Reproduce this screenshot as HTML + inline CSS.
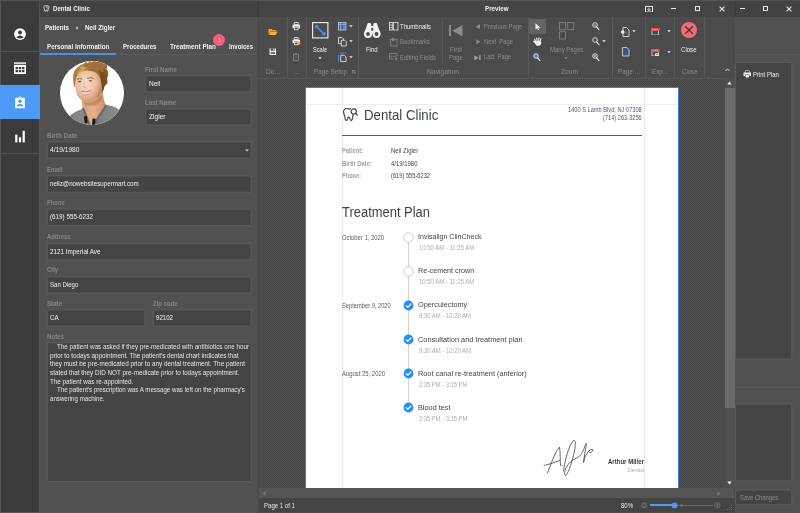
<!DOCTYPE html>
<html lang="en"><head><meta charset="utf-8"><title>Dental Clinic</title><style>
html,body{margin:0;padding:0;}
body{width:800px;height:513px;overflow:hidden;background:#515151;position:relative;font-family:"Liberation Sans",sans-serif;}
.r{position:absolute;box-sizing:border-box;}
.t{position:absolute;white-space:pre;line-height:10px;height:10px;transform-origin:0 50%;display:block;}
</style></head><body>
<div class="r" style="left:40px;top:0px;width:760px;height:17px;background:#434343;"></div>
<div class="r" style="left:0px;top:0px;width:39.2px;height:513px;background:#3b3b3b;"></div>
<div class="r" style="left:0px;top:0px;width:800px;height:1px;background:#525252;"></div>
<div class="r" style="left:0px;top:0px;width:1px;height:513px;background:#555555;"></div>
<div class="r" style="left:0px;top:511.7px;width:257px;height:1.3px;background:#585858;"></div>
<div class="r" style="left:39.2px;top:17px;width:0.8px;height:495px;background:#575757;"></div>
<div class="r" style="left:0px;top:51px;width:39.5px;height:1px;background:#505050;"></div>
<div class="r" style="left:0px;top:153.2px;width:39.5px;height:1px;background:#505050;"></div>
<div class="r" style="left:0px;top:85.3px;width:39.7px;height:34.2px;background:#4c9af6;"></div>
<svg class="r" style="left:13px;top:27px;" width="14" height="14" viewBox="0 0 14 14"><circle cx="7" cy="7.1" r="5.9" fill="#fff"/><circle cx="7" cy="5.4" r="2" fill="#3b3b3b"/><path d="M3.2 10.2 Q7 6.6 10.8 10.2 Q7 12.6 3.2 10.2Z" fill="#3b3b3b"/></svg>
<svg class="r" style="left:13px;top:61px;" width="14" height="14" viewBox="0 0 14 14"><rect x="1" y="1.4" width="12" height="1.4" fill="#fff"/><path d="M1 3.8h12v9.2h-12z" fill="#fff"/><g fill="#3b3b3b"><rect x="2.6" y="6" width="2.4" height="2.2"/><rect x="5.8" y="6" width="2.4" height="2.2"/><rect x="9" y="6" width="2.4" height="2.2"/><rect x="2.6" y="9" width="2.4" height="2.2"/><rect x="5.8" y="9" width="2.4" height="2.2"/><rect x="9" y="9" width="2.4" height="2.2"/></g></svg>
<svg class="r" style="left:13px;top:95px;" width="14" height="14" viewBox="0 0 14 14"><path d="M2.2 2.8h3.3a1.5 1.5 0 0 1 3 0h3.3v10.4h-9.6z" fill="#fff"/><circle cx="7" cy="6.3" r="1.7" fill="#4c9af6"/><path d="M3.8 11.3q0-2.3 3.2-2.3t3.2 2.3z" fill="#4c9af6"/><circle cx="7" cy="2.7" r=".6" fill="#4c9af6"/></svg>
<svg class="r" style="left:13px;top:129px;" width="14" height="14" viewBox="0 0 14 14"><rect x="2.2" y="5.6" width="2.2" height="7.8" fill="#fff"/><rect x="5.9" y="8.2" width="2.2" height="5.2" fill="#fff"/><rect x="9.6" y="1.8" width="2.2" height="11.6" fill="#fff"/></svg>
<svg class="r" style="left:43.3px;top:5.4px;" width="6.6" height="7.2" viewBox="0 0 10 12"><path d="M3.2 1.2C1.6 1.2.9 2.5 1 4c.1 1.300.7 2 .9 3.200.2 1.400.3 3.600 1.300 3.600.9 0 .7-2.800 1.800-2.800s.9 2.800 1.800 2.800c1 0 1.100-2.200 1.300-3.600.2-1.200.8-1.900.9-3.200.1-1.500-.6-2.800-2.200-2.800-.9 0-1.300.4-1.800.4s-.9-.4-1.800-.4z" fill="none" stroke="#eee" stroke-width="1.4" stroke-linejoin="round"/><circle cx="7.600" cy="3.200" r="2" fill="#434343" stroke="#eee" stroke-width="1.100"/></svg>
<span class="t" style="left:52.75px;top:4.10px;font-size:6.5px;color:#f2f2f2;transform:scaleX(0.9335);font-weight:bold;">Dental Clinic</span>
<div class="r" style="left:739.6px;top:8.3px;width:5px;height:1.2px;background:#e8e8e8;"></div>
<div class="r" style="left:763px;top:6.2px;width:5px;height:5px;background:transparent;border:1px solid #e8e8e8;"></div>
<svg class="r" style="left:785.5px;top:5.7px;" width="6" height="6" viewBox="0 0 6 6"><path d="M.6.6l4.800 4.800M5.400.6l-4.800 4.800" stroke="#e8e8e8" stroke-width="1.100" fill="none"/></svg>
<span class="t" style="left:44.80px;top:23.20px;font-size:6.5px;color:#f2f2f2;transform:scaleX(0.9491);font-weight:bold;">Patients</span>
<svg class="r" style="left:75.6px;top:25.8px;" width="3" height="4" viewBox="0 0 3 4"><path d="M.4.300L2.400 2 .4 3.700z" fill="#ddd"/></svg>
<span class="t" style="left:84.70px;top:23.20px;font-size:6.5px;color:#f2f2f2;transform:scaleX(0.9642);font-weight:bold;">Neil Zigler</span>
<span class="t" style="left:46.75px;top:41.50px;font-size:6.5px;color:#f2f2f2;transform:scaleX(0.9575);font-weight:bold;">Personal Information</span>
<span class="t" style="left:122.75px;top:41.50px;font-size:6.5px;color:#f2f2f2;transform:scaleX(0.9352);font-weight:bold;">Procedures</span>
<span class="t" style="left:169.50px;top:41.50px;font-size:6.5px;color:#f2f2f2;transform:scaleX(0.9871);font-weight:bold;">Treatment Plan</span>
<span class="t" style="left:229.00px;top:41.50px;font-size:6.5px;color:#f2f2f2;transform:scaleX(0.9226);font-weight:bold;">Invoices</span>
<div class="r" style="left:40px;top:54px;width:218px;height:1px;background:#5a5a5a;"></div>
<div class="r" style="left:40px;top:53px;width:76px;height:2px;background:#4a90e2;"></div>
<div class="r" style="left:213px;top:34px;width:12px;height:12px;background:#f4607a;border-radius:50%;"></div>
<span class="t" style="left:217.70px;top:35.20px;font-size:5px;color:#ffd9df;transform:scaleX(0.9350);">3</span>
<svg class="r" style="left:60px;top:61.3px;" width="64" height="64" viewBox="0 0 64 64"><defs><clipPath id="avc"><circle cx="32" cy="32" r="32"/></clipPath>
<radialGradient id="skin" cx="40%" cy="42%" r="65%"><stop offset="0" stop-color="#f8dcc4"/><stop offset=".55" stop-color="#ecc0a0"/><stop offset="1" stop-color="#c8906a"/></radialGradient>
<linearGradient id="neck" x1="0" y1="0" x2="1" y2="0"><stop offset="0" stop-color="#d9a27a"/><stop offset=".5" stop-color="#e4b08a"/><stop offset="1" stop-color="#c98e66"/></linearGradient>
<linearGradient id="hair" x1="0" y1="0" x2="1" y2="1"><stop offset="0" stop-color="#c49458"/><stop offset=".5" stop-color="#a06f3a"/><stop offset="1" stop-color="#684424"/></linearGradient>
<linearGradient id="shirt" x1="0" y1="0" x2="1" y2="0"><stop offset="0" stop-color="#7c7c7c"/><stop offset="1" stop-color="#8e8e8e"/></linearGradient>
<filter id="bl" x="-10%" y="-10%" width="120%" height="120%"><feGaussianBlur stdDeviation="0.55"/></filter>
<filter id="bl2" x="-10%" y="-10%" width="120%" height="120%"><feGaussianBlur stdDeviation="0.9"/></filter></defs>
<circle cx="32" cy="32" r="32" fill="#fff"/>
<g clip-path="url(#avc)">
<g filter="url(#bl)">
<path d="M21 30L22.500 47 28.500 66 37 66 46.500 44.500Q43 40 43 30z" fill="url(#neck)"/>
<path d="M23 40Q28 44.500 37 38L42 33 42.500 38 36 44.500 26 44.500z" fill="#b87c54" opacity=".7"/>
<path d="M5 66L9 56Q13 51 21 48.500L23 47 30.500 66z" fill="url(#shirt)"/>
<path d="M33 66L38.500 56 46.500 44Q52 44.500 57 47Q61 50 63 55L63 66z" fill="url(#shirt)"/>
<path d="M23 47L30.500 66M46.500 44L38.500 56 33.500 66" stroke="#6c6c6c" stroke-width="2.200" fill="none"/>
<path d="M23.800 55.500l3.200-.5.600 7-2.700.2zM32.500 57.500l3.200.3-.8 6.500-2.800-.3z" fill="#161616"/>
<path d="M38 20h5v12h-5z" fill="#c48a5e"/><path d="M15.500 20Q14.500 31 19 37Q23 41.200 28 41.200Q34 40.700 38.500 34.800Q42 29 41.500 19Q40 7 28 7Q16.500 7.500 15.500 20z" fill="url(#skin)"/>
<path d="M36 36Q40 30 40.500 22L42 24Q42 32 38 37z" fill="#b87a50" opacity=".7"/>
<path d="M40.500 23.500q2.200-1.500 2.200 1.500q0 3-2.200 4.500z" fill="#c98a60"/>
</g>
<g filter="url(#bl)">
<path d="M13.500 22Q11.500 12 17 6.500Q22 1.500 30 2Q33 -1 38 1.500Q41 -1 44 3Q49 2 46.500 8Q50 12 47 17Q49 22 44.500 25Q44 29 42.500 31Q42 24 40.500 18Q38 11.500 33 10.500Q27 8.500 21 11Q16.500 13.500 15.500 20Q15 24 15 27Q13.800 25 13.500 22z" fill="url(#hair)"/>
<path d="M38 5.500L45.500 9 47 16.500 44.500 25 42.500 31Q42.500 24 40.800 18.500Q39.500 11 38 5.500z" fill="#70441e" opacity=".6"/><path d="M20 7Q26 3 33 5Q27 5 22 9z" fill="#e0ad66" opacity=".8"/>
<path d="M37 6Q42 9 43 16Q44 22 42.500 27Q43 18 40 12Q38.500 8 37 6z" fill="#6b3f1c" opacity=".55"/><path d="M24 3l2-2.500 1.500 2.200 2.500-3 1.500 2.800 3-2.800.8 2.600 3.500-2.200.2 2.900 3.600-.9-1 2.800 3.200 1-2.300 2 2.300 2.500-2.800.8Q36 6 24 6z" fill="#a06f3a"/><path d="M17 12Q20 8 26 7.500Q21 10 18.500 15z" fill="#e2b06c" opacity=".7"/><path d="M28 8Q33 7 37 10Q33 9 29 10z" fill="#8a5628" opacity=".6"/>
</g>
<g filter="url(#bl)">
<path d="M21.500 30.800q4.500 1.500 9-.5q-1 3-4.400 3.300q-3.300 0-4.600-2.800z" fill="#efe0da"/>
<path d="M21 30.400q5 1.400 10-.7" stroke="#cf6a78" stroke-width=".9" fill="none"/>
<path d="M22.300 33.300q3.600 2 7.400-.5" stroke="#d07880" stroke-width=".8" fill="none"/>
<ellipse cx="19.800" cy="20.600" rx="1.700" ry=".8" fill="#4a5f78"/><ellipse cx="30.400" cy="19.800" rx="1.700" ry=".8" fill="#4a5f78"/>
<path d="M16.800 18.300q3-1.400 5.600-.2M27.200 17.400q3.200-1.400 6.500 0" stroke="#8a5c2c" stroke-width=".9" fill="none"/>
<path d="M25 20.500q-1.600 4-.9 5.800q1.200.8 2.600.2" stroke="#d09a70" stroke-width=".7" fill="none" opacity=".8"/>
</g>
</g></svg>
<span class="t" style="left:145.40px;top:65.40px;font-size:6.5px;color:#868686;transform:scaleX(0.9466);font-weight:bold;">First Name</span>
<svg class="r" style="left:143px;top:74px;" width="110" height="21" viewBox="0 0 110 21"><rect x="2.55" y="1.65" width="105.70" height="16.40" rx="1.300" fill="#444444" stroke="#595959" stroke-width="1.3"/></svg>
<span class="t" style="left:148.80px;top:78.60px;font-size:6.5px;color:#f2f2f2;transform:scaleX(1.0002);">Neil</span>
<span class="t" style="left:145.40px;top:98.20px;font-size:6.5px;color:#868686;transform:scaleX(0.9460);font-weight:bold;">Last Name</span>
<svg class="r" style="left:143px;top:107px;" width="110" height="21" viewBox="0 0 110 21"><rect x="2.55" y="1.75" width="105.70" height="16.40" rx="1.300" fill="#444444" stroke="#595959" stroke-width="1.3"/></svg>
<span class="t" style="left:148.80px;top:111.70px;font-size:6.5px;color:#f2f2f2;transform:scaleX(1.0151);">Zigler</span>
<span class="t" style="left:46.90px;top:130.65px;font-size:6.5px;color:#868686;transform:scaleX(0.9755);font-weight:bold;">Birth Date</span>
<svg class="r" style="left:45px;top:140px;" width="209" height="21" viewBox="0 0 209 21"><rect x="2.05" y="1.90" width="204.20" height="16.40" rx="1.300" fill="#444444" stroke="#595959" stroke-width="1.3"/></svg>
<span class="t" style="left:50.00px;top:144.85px;font-size:6.5px;color:#f2f2f2;transform:scaleX(1.0201);">4/19/1980</span>
<svg class="r" style="left:245px;top:148.85px;" width="4" height="3" viewBox="0 0 4 3"><path d="M.2.400h3.600L2 2.600z" fill="#ddd"/></svg>
<span class="t" style="left:46.90px;top:164.65px;font-size:6.5px;color:#868686;transform:scaleX(0.8996);font-weight:bold;">Email</span>
<svg class="r" style="left:45px;top:174px;" width="209" height="21" viewBox="0 0 209 21"><rect x="2.05" y="1.90" width="204.20" height="16.40" rx="1.300" fill="#444444" stroke="#595959" stroke-width="1.3"/></svg>
<span class="t" style="left:50.00px;top:178.85px;font-size:6.5px;color:#f2f2f2;transform:scaleX(0.9586);">neilz@nowebsitesupermart.com</span>
<span class="t" style="left:46.90px;top:197.90px;font-size:6.5px;color:#868686;transform:scaleX(0.8861);font-weight:bold;">Phone</span>
<svg class="r" style="left:45px;top:207px;" width="209" height="21" viewBox="0 0 209 21"><rect x="2.05" y="2.15" width="204.20" height="16.40" rx="1.300" fill="#444444" stroke="#595959" stroke-width="1.3"/></svg>
<span class="t" style="left:50.00px;top:212.10px;font-size:6.5px;color:#f2f2f2;transform:scaleX(0.9673);">(619) 555-6232</span>
<span class="t" style="left:46.90px;top:232.40px;font-size:6.5px;color:#868686;transform:scaleX(0.9073);font-weight:bold;">Address</span>
<svg class="r" style="left:45px;top:242px;" width="209" height="21" viewBox="0 0 209 21"><rect x="2.05" y="1.65" width="204.20" height="16.40" rx="1.300" fill="#444444" stroke="#595959" stroke-width="1.3"/></svg>
<span class="t" style="left:50.00px;top:246.60px;font-size:6.5px;color:#f2f2f2;transform:scaleX(0.9727);">2121 Imperial Ave</span>
<span class="t" style="left:46.90px;top:265.40px;font-size:6.5px;color:#868686;transform:scaleX(0.9039);font-weight:bold;">City</span>
<svg class="r" style="left:45px;top:275px;" width="209" height="21" viewBox="0 0 209 21"><rect x="2.05" y="1.65" width="204.20" height="16.40" rx="1.300" fill="#444444" stroke="#595959" stroke-width="1.3"/></svg>
<span class="t" style="left:50.00px;top:279.60px;font-size:6.5px;color:#f2f2f2;transform:scaleX(0.9306);">San Diego</span>
<span class="t" style="left:46.90px;top:298.65px;font-size:6.5px;color:#868686;transform:scaleX(0.9500);font-weight:bold;">State</span>
<svg class="r" style="left:45px;top:308px;" width="103" height="21" viewBox="0 0 103 21"><rect x="2.05" y="1.90" width="98.00" height="16.40" rx="1.300" fill="#444444" stroke="#595959" stroke-width="1.3"/></svg>
<span class="t" style="left:50.00px;top:312.85px;font-size:6.5px;color:#f2f2f2;transform:scaleX(0.9690);">CA</span>
<span class="t" style="left:153.20px;top:298.65px;font-size:6.5px;color:#868686;transform:scaleX(0.9280);font-weight:bold;">Zip code</span>
<svg class="r" style="left:151px;top:308px;" width="103" height="21" viewBox="0 0 103 21"><rect x="2.35" y="1.90" width="97.90" height="16.40" rx="1.300" fill="#444444" stroke="#595959" stroke-width="1.3"/></svg>
<span class="t" style="left:156.25px;top:312.85px;font-size:6.5px;color:#f2f2f2;transform:scaleX(0.9405);">92102</span>
<span class="t" style="left:47.00px;top:331.60px;font-size:6.5px;color:#868686;transform:scaleX(0.9413);font-weight:bold;">Notes</span>
<svg class="r" style="left:45px;top:341px;" width="209" height="144" viewBox="0 0 209 144"><rect x="2.05" y="1.65" width="204.20" height="138.90" rx="1.300" fill="#444444" stroke="#595959" stroke-width="1.3"/></svg>
<span class="t" style="left:57.00px;top:342.20px;font-size:6.5px;color:#e6e6e6;transform:scaleX(0.9644);">The patient was asked if they pre-medicated with antibiotics one hour</span>
<span class="t" style="left:50.00px;top:350.80px;font-size:6.5px;color:#e6e6e6;transform:scaleX(0.9664);">prior to todays appointment. The patient&#x27;s dental chart indicates that</span>
<span class="t" style="left:50.00px;top:359.40px;font-size:6.5px;color:#e6e6e6;transform:scaleX(0.9765);">they must be pre-medicated prior to any dental treatment. The patient</span>
<span class="t" style="left:50.00px;top:368.00px;font-size:6.5px;color:#e6e6e6;transform:scaleX(0.9709);">stated that they DID NOT pre-medicate prior to todays appointment.</span>
<span class="t" style="left:50.00px;top:376.60px;font-size:6.5px;color:#e6e6e6;transform:scaleX(0.9686);">The patient was re-appointed.</span>
<span class="t" style="left:57.20px;top:385.20px;font-size:6.5px;color:#e6e6e6;transform:scaleX(0.9487);">The patient&#x27;s prescription was A message was left on the pharmacy&#x27;s</span>
<span class="t" style="left:50.00px;top:393.80px;font-size:6.5px;color:#e6e6e6;transform:scaleX(0.9427);">answering machine.</span>
<div class="r" style="left:734px;top:54px;width:66px;height:1px;background:#5a5a5a;"></div>
<svg class="r" style="left:733px;top:60px;" width="61" height="301" viewBox="0 0 61 301"><rect x="2.45" y="2.35" width="56.40" height="296.70" rx="1.300" fill="#444444" stroke="#595959" stroke-width="1.3"/></svg>
<svg class="r" style="left:743px;top:70.4px;" width="8.5" height="8" viewBox="0 0 17 16"><path d="M4 1h9v4H4z M1 5h15v7h-3v-3H4v3H1z M5 10h7v5H5z" fill="#f0f0f0" fill-rule="evenodd"/><path d="M5 2h7v3H5z" fill="#444"/></svg>
<span class="t" style="left:752.80px;top:69.60px;font-size:6.5px;color:#f2f2f2;transform:scaleX(0.9155);">Print Plan</span>
<div class="r" style="left:734px;top:387px;width:66px;height:1px;background:#585858;"></div>
<svg class="r" style="left:733px;top:402px;" width="61" height="81" viewBox="0 0 61 81"><rect x="2.45" y="2.15" width="56.40" height="76.70" rx="1.300" fill="#444444" stroke="#595959" stroke-width="1.3"/></svg>
<svg class="r" style="left:733px;top:488px;" width="61" height="19" viewBox="0 0 61 19"><rect x="2.45" y="1.95" width="56.40" height="14.70" rx="1.300" fill="#444444" stroke="#595959" stroke-width="1.3"/></svg>
<span class="t" style="left:739.75px;top:493.40px;font-size:6.5px;color:#8a8a8a;transform:scaleX(0.8970);">Save Changes</span>
<div class="r" style="left:257px;top:0px;width:477.6px;height:513px;background:#4b4b4b;"></div>
<div class="r" style="left:257px;top:0px;width:477.6px;height:17px;background:#454545;"></div>
<div class="r" style="left:257px;top:1px;width:1.5px;height:16px;background:#3d3d3d;"></div>
<div class="r" style="left:734.1px;top:1px;width:1.5px;height:16px;background:#3e3e3e;"></div>
<div class="r" style="left:257px;top:0px;width:477.6px;height:1px;background:#555;"></div>
<span class="t" style="left:484.70px;top:4.30px;font-size:6.5px;color:#f2f2f2;transform:scaleX(0.9564);font-weight:bold;">Preview</span>
<svg class="r" style="left:644.5px;top:5.5px;" width="8" height="6.5" viewBox="0 0 8 6.500"><rect x=".5" y=".5" width="7" height="5.500" fill="none" stroke="#e8e8e8" stroke-width="1"/><path d="M4 1.800v2.800M2.600 3.200L4 4.800 5.400 3.200" stroke="#e8e8e8" stroke-width=".9" fill="none"/></svg>
<div class="r" style="left:670.8px;top:8.3px;width:5px;height:1.2px;background:#e8e8e8;"></div>
<div class="r" style="left:695px;top:6.2px;width:5px;height:5px;background:transparent;border:1px solid #e8e8e8;"></div>
<svg class="r" style="left:718.9px;top:5.7px;" width="6" height="6" viewBox="0 0 6 6"><path d="M.6.6l4.800 4.800M5.400.6l-4.800 4.800" stroke="#e8e8e8" stroke-width="1.100" fill="none"/></svg>
<svg class="r" style="left:259px;top:78px;" width="466" height="410" viewBox="0 0 466 410"><defs><pattern id="hp" width="2" height="2" patternUnits="userSpaceOnUse"><rect width="2" height="2" fill="#464646"/><rect width="1" height="1" fill="#515151"/><rect x="1" y="1" width="1" height="1" fill="#515151"/></pattern></defs><rect width="466" height="410" fill="url(#hp)" shape-rendering="crispEdges"/></svg>
<div class="r" style="left:257px;top:77.5px;width:477.6px;height:1px;background:#575757;"></div>
<div class="r" style="left:724.6px;top:78px;width:10px;height:410px;background:#4f4f4f;"></div>
<svg class="r" style="left:727px;top:80.5px;" width="5" height="4" viewBox="0 0 5 4"><path d="M2.500.400L4.700 3.600H.3z" fill="#f0f0f0"/></svg>
<svg class="r" style="left:727px;top:480.5px;" width="5" height="4" viewBox="0 0 5 4"><path d="M2.500 3.600L4.700.400H.3z" fill="#f0f0f0"/></svg>
<div class="r" style="left:724.6px;top:88px;width:10px;height:319.5px;background:#6a6a6a;"></div>
<div class="r" style="left:259px;top:488px;width:475px;height:10px;background:#555555;"></div>
<svg class="r" style="left:261.5px;top:490.5px;" width="4" height="5" viewBox="0 0 4 5"><path d="M.4 2.500L3.600.300v4.400z" fill="#747474"/></svg>
<svg class="r" style="left:717px;top:490.5px;" width="4" height="5" viewBox="0 0 4 5"><path d="M3.600 2.500L.4.300v4.400z" fill="#787878"/></svg>
<div class="r" style="left:259px;top:497.5px;width:475.6px;height:14px;background:#444444;"></div>
<span class="t" style="left:263.60px;top:500.80px;font-size:6.5px;color:#e8e8e8;transform:scaleX(0.9293);">Page 1 of 1</span>
<span class="t" style="left:621.00px;top:501.00px;font-size:6.5px;color:#e8e8e8;transform:scaleX(0.9224);">80%</span>
<svg class="r" style="left:640.5px;top:502px;" width="6.5" height="6.5" viewBox="0 0 6.500 6.500"><circle cx="3.250" cy="3.250" r="2.700" fill="#5e5e5e" stroke="#777" stroke-width=".6"/><path d="M1.800 3.250h2.900" stroke="#444" stroke-width=".8"/></svg>
<div class="r" style="left:649.5px;top:505px;width:63px;height:1px;background:#6a6a6a;"></div>
<svg class="r" style="left:678.5px;top:503px;" width="5" height="5" viewBox="0 0 5 5"><path d="M2.500.700L4.300 2.500 2.500 4.300.700 2.500z" fill="#6e6e6e"/></svg>
<div class="r" style="left:649.5px;top:504.3px;width:25px;height:2px;background:#4c9af6;"></div>
<svg class="r" style="left:671px;top:502px;" width="7" height="7" viewBox="0 0 7 7"><circle cx="3.500" cy="3.400" r="2.900" fill="#4c9af6"/></svg>
<svg class="r" style="left:714.2px;top:502px;" width="6.5" height="6.5" viewBox="0 0 6.500 6.500"><circle cx="3.250" cy="3.250" r="2.700" fill="#4a4a4a" stroke="#777" stroke-width=".7"/><path d="M1.800 3.250h2.900M3.250 1.800v2.900" stroke="#777" stroke-width=".7"/></svg>
<svg class="r" style="left:726px;top:504px;" width="7" height="7" viewBox="0 0 7 7"><g fill="#6a6a6a"><rect x="5" y="1" width="1" height="1"/><rect x="3" y="3" width="1" height="1"/><rect x="5" y="3" width="1" height="1"/><rect x="1" y="5" width="1" height="1"/><rect x="3" y="5" width="1" height="1"/><rect x="5" y="5" width="1" height="1"/></g></svg>
<div class="r" style="left:304.5px;top:86.5px;width:374.5px;height:401.5px;background:#ffffff;border:1px solid #3f7bd8;border-bottom:none;"></div>
<div class="r" style="left:342px;top:87.5px;width:1px;height:400.5px;background:#ececec;"></div>
<div class="r" style="left:644px;top:87.5px;width:1px;height:400.5px;background:#ececec;"></div>
<div class="r" style="left:305.5px;top:104px;width:372.5px;height:1px;background:#ececec;"></div>
<svg class="r" style="left:342px;top:107.3px;" width="17" height="14.8" viewBox="0 0 34 30"><path d="M9.500 3C5 3 2.500 6.500 3 11c.4 3.500 1.800 5 2.400 8 .5 3 .6 8.500 3.400 8.500 2.600 0 1.800-7 4.700-7s2.100 7 4.700 7c2.800 0 2.900-5.500 3.400-8.500.3-1.500.8-2.600 1.300-3.700" fill="none" stroke="#3d434e" stroke-width="2.400" stroke-linecap="round" stroke-linejoin="round"/><path d="M9.500 3c2.500 0 3.500 1.200 5 1.200 1 0 1.800-.5 2.800-.9" fill="none" stroke="#3d434e" stroke-width="2.400" stroke-linecap="round"/><circle cx="23.500" cy="9" r="5.200" fill="#fff" stroke="#3d434e" stroke-width="2.400"/><path d="M27.300 12.800L31 16.500" stroke="#3d434e" stroke-width="2.600" stroke-linecap="round"/></svg>
<span class="t" style="left:363.75px;top:109.70px;font-size:14px;color:#3d434e;transform:scaleX(0.9448);">Dental Clinic</span>
<span class="t" style="left:568.00px;top:105.00px;font-size:6.5px;color:#555b66;transform:scaleX(0.8722);">1400 S Lamb Blvd, NJ 07308</span>
<span class="t" style="left:603.00px;top:113.00px;font-size:6.5px;color:#555b66;transform:scaleX(0.8717);">(714) 263-3256</span>
<div class="r" style="left:342px;top:134.6px;width:300px;height:1.1px;background:#5a606a;"></div>
<span class="t" style="left:342.00px;top:145.50px;font-size:6.5px;color:#9aa1b2;transform:scaleX(0.8810);font-weight:bold;">Patient:</span>
<span class="t" style="left:342.00px;top:158.50px;font-size:6.5px;color:#9aa1b2;transform:scaleX(0.9029);font-weight:bold;">Birth Date:</span>
<span class="t" style="left:342.00px;top:171.30px;font-size:6.5px;color:#9aa1b2;transform:scaleX(0.8626);font-weight:bold;">Phone:</span>
<span class="t" style="left:390.75px;top:145.50px;font-size:6.5px;color:#404652;transform:scaleX(0.9314);">Neil Zigler</span>
<span class="t" style="left:391.00px;top:158.50px;font-size:6.5px;color:#404652;transform:scaleX(0.9164);">4/19/1980</span>
<span class="t" style="left:391.00px;top:171.30px;font-size:6.5px;color:#404652;transform:scaleX(0.8774);">(619) 555-6232</span>
<span class="t" style="left:342.00px;top:206.70px;font-size:14px;color:#3d434e;transform:scaleX(0.9244);">Treatment Plan</span>
<div class="r" style="left:407.6px;top:237px;width:1px;height:171px;background:#d2d2d2;"></div>
<svg class="r" style="left:402.5px;top:231.5px;" width="11" height="11" viewBox="0 0 11 11"><circle cx="5.500" cy="5.500" r="4.800" fill="#fff" stroke="#c4c4c4" stroke-width=".9"/></svg>
<span class="t" style="left:417.50px;top:232.00px;font-size:7.5px;color:#404652;transform:scaleX(0.9403);">Invisalign ClinCheck</span>
<span class="t" style="left:418.75px;top:243.00px;font-size:6.5px;color:#a7acb6;transform:scaleX(0.9174);">10:50 AM - 11:25 AM</span>
<svg class="r" style="left:402.5px;top:265.7px;" width="11" height="11" viewBox="0 0 11 11"><circle cx="5.500" cy="5.500" r="4.800" fill="#fff" stroke="#c4c4c4" stroke-width=".9"/></svg>
<span class="t" style="left:417.50px;top:266.20px;font-size:7.5px;color:#404652;transform:scaleX(0.9571);">Re-cement crown</span>
<span class="t" style="left:418.75px;top:277.20px;font-size:6.5px;color:#a7acb6;transform:scaleX(0.9174);">10:50 AM - 11:25 AM</span>
<svg class="r" style="left:402.5px;top:299.9px;" width="11" height="11" viewBox="0 0 11 11"><circle cx="5.500" cy="5.500" r="4.900" fill="#1e90ff"/><path d="M3.100 5.600L4.800 7.300 7.900 4" stroke="#fff" stroke-width="1.200" fill="none" stroke-linecap="round" stroke-linejoin="round"/></svg>
<span class="t" style="left:417.50px;top:300.40px;font-size:7.5px;color:#404652;transform:scaleX(0.9765);">Operculectomy</span>
<span class="t" style="left:418.75px;top:311.40px;font-size:6.5px;color:#a7acb6;transform:scaleX(0.9109);">9:30 AM - 10:20 AM</span>
<svg class="r" style="left:402.5px;top:334.1px;" width="11" height="11" viewBox="0 0 11 11"><circle cx="5.500" cy="5.500" r="4.900" fill="#1e90ff"/><path d="M3.100 5.600L4.800 7.300 7.900 4" stroke="#fff" stroke-width="1.200" fill="none" stroke-linecap="round" stroke-linejoin="round"/></svg>
<span class="t" style="left:417.50px;top:334.60px;font-size:7.5px;color:#404652;transform:scaleX(0.9829);">Consultation and treatment plan</span>
<span class="t" style="left:418.75px;top:345.60px;font-size:6.5px;color:#a7acb6;transform:scaleX(0.9109);">9:30 AM - 10:20 AM</span>
<svg class="r" style="left:402.5px;top:368.2px;" width="11" height="11" viewBox="0 0 11 11"><circle cx="5.500" cy="5.500" r="4.900" fill="#1e90ff"/><path d="M3.100 5.600L4.800 7.300 7.900 4" stroke="#fff" stroke-width="1.200" fill="none" stroke-linecap="round" stroke-linejoin="round"/></svg>
<span class="t" style="left:417.50px;top:368.70px;font-size:7.5px;color:#404652;transform:scaleX(0.9771);">Root canal re-treatment (anterior)</span>
<span class="t" style="left:418.75px;top:379.70px;font-size:6.5px;color:#a7acb6;transform:scaleX(0.8904);">2:35 PM - 3:15 PM</span>
<svg class="r" style="left:402.5px;top:402.2px;" width="11" height="11" viewBox="0 0 11 11"><circle cx="5.500" cy="5.500" r="4.900" fill="#1e90ff"/><path d="M3.100 5.600L4.800 7.300 7.900 4" stroke="#fff" stroke-width="1.200" fill="none" stroke-linecap="round" stroke-linejoin="round"/></svg>
<span class="t" style="left:417.50px;top:402.70px;font-size:7.5px;color:#404652;transform:scaleX(0.9744);">Blood test</span>
<span class="t" style="left:418.75px;top:413.70px;font-size:6.5px;color:#a7acb6;transform:scaleX(0.8904);">2:35 PM - 3:15 PM</span>
<span class="t" style="left:342.00px;top:232.60px;font-size:6.5px;color:#555b66;transform:scaleX(0.9010);">October 1, 2020</span>
<span class="t" style="left:342.00px;top:301.00px;font-size:6.5px;color:#555b66;transform:scaleX(0.8817);">September 9, 2020</span>
<span class="t" style="left:342.00px;top:369.30px;font-size:6.5px;color:#555b66;transform:scaleX(0.9082);">August 25, 2020</span>
<svg class="r" style="left:543px;top:438px;" width="51" height="39" viewBox="0 0 51 39"><path d="M1 27.500C6 26.500 12 24 16.500 22.500M4.500 35C8 26 12 14 16.500 9C17.500 15 17 22 17.500 27.500M19 27.200l.2.300M20.500 33C22 22 25.500 8 30.500 2.500C33 1 32.500 8 31.500 13C29.500 22 26 34 23 37.500C20.500 38 21.500 32 24 28C28 22 33 20.500 36 18.500C38.500 17 40.500 12 42.500 6.500C43.500 4 43.500 6 43 8.500C42 14 41 20 40.500 24.500C41.500 19.500 43 16 46 13C48 11 50.500 10.500 49.500 13C48.500 15 46 15.500 45.500 13.500" fill="none" stroke="#3c4452" stroke-width=".8" stroke-linecap="round" stroke-linejoin="round"/></svg>
<span class="t" style="left:608.40px;top:457.00px;font-size:6.5px;color:#333944;transform:scaleX(0.9291);font-weight:bold;">Arthur Miller</span>
<span class="t" style="left:628.00px;top:465.30px;font-size:5.8px;color:#a7acb6;transform:scaleX(0.9030);">Dentist</span>
<div class="r" style="left:286.5px;top:17px;width:1px;height:61px;background:#5a5a5a;"></div>
<div class="r" style="left:306px;top:17px;width:1px;height:61px;background:#5a5a5a;"></div>
<div class="r" style="left:358px;top:17px;width:1px;height:61px;background:#5a5a5a;"></div>
<div class="r" style="left:527.7px;top:17px;width:1px;height:61px;background:#5a5a5a;"></div>
<div class="r" style="left:611.7px;top:17px;width:1px;height:61px;background:#5a5a5a;"></div>
<div class="r" style="left:645px;top:17px;width:1px;height:61px;background:#5a5a5a;"></div>
<div class="r" style="left:674px;top:17px;width:1px;height:61px;background:#5a5a5a;"></div>
<div class="r" style="left:703.7px;top:17px;width:1px;height:61px;background:#5a5a5a;"></div>
<div class="r" style="left:442px;top:20px;width:1px;height:43px;background:#5a5a5a;"></div>
<span class="t" style="left:266.00px;top:67.00px;font-size:6.5px;color:#8c8c8c;transform:scaleX(1.0199);">Do...</span>
<span class="t" style="left:293.50px;top:67.00px;font-size:6.5px;color:#8c8c8c;transform:scaleX(1.0153);">...</span>
<span class="t" style="left:313.50px;top:67.00px;font-size:6.5px;color:#8c8c8c;transform:scaleX(0.9743);">Page Setup</span>
<span class="t" style="left:427.00px;top:67.00px;font-size:6.5px;color:#8c8c8c;transform:scaleX(1.0419);">Navigation</span>
<span class="t" style="left:561.00px;top:67.00px;font-size:6.5px;color:#8c8c8c;transform:scaleX(1.0231);">Zoom</span>
<span class="t" style="left:618.00px;top:67.00px;font-size:6.5px;color:#8c8c8c;transform:scaleX(0.9820);">Page ...</span>
<span class="t" style="left:652.00px;top:67.00px;font-size:6.5px;color:#8c8c8c;transform:scaleX(0.9628);">Exp...</span>
<span class="t" style="left:681.50px;top:67.00px;font-size:6.5px;color:#8c8c8c;transform:scaleX(0.9327);">Close</span>
<svg class="r" style="left:351.6px;top:70px;" width="4" height="4" viewBox="0 0 4 4"><rect x=".4" y=".4" width="2.600" height="2.600" fill="none" stroke="#8c8c8c" stroke-width=".7"/><path d="M2.400 2.400l1.300 1.300" stroke="#8c8c8c" stroke-width=".8"/></svg>
<svg class="r" style="left:268px;top:27.5px;" width="9.5" height="7" viewBox="0 0 19 14"><path d="M1 2h6l2 2h7v2H5l-3 7H1z" fill="#f5a623"/><path d="M5.500 7H19l-3.500 7H2.200z" fill="#f7b43a"/></svg>
<svg class="r" style="left:269px;top:48px;" width="7.5" height="7.5" viewBox="0 0 15 15"><path d="M1 1h13v13H1z" fill="#f2f2f2"/><rect x="3.500" y="1" width="8" height="4.500" fill="#4b4b4b"/><rect x="8.500" y="1.800" width="2" height="3" fill="#f2f2f2"/><rect x="3" y="8.500" width="9" height="3" fill="#4b4b4b"/></svg>
<svg class="r" style="left:292px;top:22px;" width="8.5" height="8.5" viewBox="0 0 17 17"><path d="M4.500 1h8v4h-8z" fill="none" stroke="#f2f2f2" stroke-width="1.600"/><path d="M1 5.500h15v7h-3v-3.500H4v3.500H1z" fill="#f2f2f2"/><rect x="4.800" y="10.500" width="7.400" height="5" fill="none" stroke="#f2f2f2" stroke-width="1.600"/></svg>
<svg class="r" style="left:292px;top:37px;" width="8.5" height="8.5" viewBox="0 0 17 17"><path d="M4.500 1h8v4h-8z" fill="none" stroke="#f2f2f2" stroke-width="1.600"/><path d="M1 5.500h15v7h-3v-3.500H4v3.500H1z" fill="#f2f2f2"/><rect x="4.800" y="10.500" width="7.400" height="5" fill="none" stroke="#f2f2f2" stroke-width="1.600"/><circle cx="13.500" cy="12.500" r="3" fill="#f5a623"/></svg>
<svg class="r" style="left:293px;top:53px;" width="6" height="8" viewBox="0 0 12 16"><rect x="1" y="2.500" width="10" height="12.500" fill="none" stroke="#8c8c8c" stroke-width="1.500"/><rect x="4" y=".8" width="4" height="3" fill="#8c8c8c"/><rect x="5.300" y="7" width="1.400" height="3" fill="#8c8c8c"/></svg>
<svg class="r" style="left:312px;top:22px;" width="16.5" height="16.5" viewBox="0 0 33 33"><rect x="1.200" y="1.200" width="30.600" height="30.600" fill="none" stroke="#f2f2f2" stroke-width="2.200"/><path d="M8 8L25 25" stroke="#4c9af6" stroke-width="3"/><path d="M6.500 6.500h7.500l-7.500 7.500zM26.500 26.500h-7.500l7.500-7.500z" fill="#4c9af6"/></svg>
<span class="t" style="left:313.00px;top:45.00px;font-size:6.5px;color:#f2f2f2;transform:scaleX(0.8610);">Scale</span>
<svg class="r" style="left:318px;top:56.8px;" width="4" height="2.5" viewBox="0 0 4 2.500"><path d="M.2.200h3.600L2 2.300z" fill="#e6e6e6"/></svg>
<svg class="r" style="left:338px;top:22px;" width="8.5" height="8.5" viewBox="0 0 17 17"><rect x="1" y="1" width="15" height="15" fill="#3d6db5" stroke="#cfd8e8" stroke-width="1.400"/><path d="M5 1v15M12 1v15M1 5h15" stroke="#9fc3f5" stroke-width="1.200"/></svg>
<svg class="r" style="left:348.5px;top:25.3px;" width="4" height="2.5" viewBox="0 0 4 2.500"><path d="M.2.200h3.600L2 2.300z" fill="#e6e6e6"/></svg>
<svg class="r" style="left:338px;top:37px;" width="9" height="9.5" viewBox="0 0 18 19"><path d="M1 1h7l3 3v9H1z" fill="none" stroke="#f2f2f2" stroke-width="1.600"/><path d="M6.500 6.500h7l3 3V18H6.500z" fill="#4b4b4b" stroke="#f2f2f2" stroke-width="1.600"/></svg>
<svg class="r" style="left:348.5px;top:40.3px;" width="4" height="2.5" viewBox="0 0 4 2.500"><path d="M.2.200h3.600L2 2.300z" fill="#e6e6e6"/></svg>
<svg class="r" style="left:338px;top:52px;" width="9" height="10" viewBox="0 0 18 20"><path d="M5.500 6.500h7l3.500 3.500v9H5.500z" fill="none" stroke="#f2f2f2" stroke-width="1.600"/><path d="M1.200 5v14.500M4 2h12.500" stroke="#4c9af6" stroke-width="1.600"/></svg>
<svg class="r" style="left:348.5px;top:56.3px;" width="4" height="2.5" viewBox="0 0 4 2.500"><path d="M.2.200h3.600L2 2.300z" fill="#e6e6e6"/></svg>
<svg class="r" style="left:364px;top:23px;" width="16.5" height="15" viewBox="0 0 33 30"><g fill="#f2f2f2"><path d="M7.500 0h6l1.500 6h3l1.500-6h6l5 14 2.500 8h-33l2.500-8z"/><circle cx="8" cy="22" r="8"/><circle cx="25" cy="22" r="8"/></g><circle cx="8" cy="22" r="3.800" fill="#4b4b4b"/><circle cx="25" cy="22" r="3.800" fill="#4b4b4b"/><path d="M14.500 9.500v6h4v-6" fill="#4b4b4b"/></svg>
<span class="t" style="left:366.00px;top:45.00px;font-size:6.5px;color:#f2f2f2;transform:scaleX(0.9094);">Find</span>
<svg class="r" style="left:389px;top:22px;" width="9.5" height="8.5" viewBox="0 0 19 17"><rect x="1" y="1" width="5.500" height="15" fill="none" stroke="#f2f2f2" stroke-width="1.500"/><rect x="9" y="1" width="9" height="15" fill="none" stroke="#f2f2f2" stroke-width="1.500"/><path d="M1 6h5.500M1 11h5.500" stroke="#f2f2f2" stroke-width="1.300"/></svg>
<span class="t" style="left:400.00px;top:21.50px;font-size:6.5px;color:#f2f2f2;transform:scaleX(0.9226);">Thumbnails</span>
<svg class="r" style="left:390px;top:38px;" width="7.5" height="8.5" viewBox="0 0 15 17"><rect x="1" y="2.500" width="13" height="13.500" fill="none" stroke="#8c8c8c" stroke-width="1.500"/><path d="M4 .5h4.500v6L6.200 5 4 6.500z" fill="#8c8c8c"/></svg>
<span class="t" style="left:400.00px;top:37.00px;font-size:6.5px;color:#8c8c8c;transform:scaleX(0.9228);">Bookmarks</span>
<svg class="r" style="left:389px;top:53px;" width="9.5" height="8" viewBox="0 0 19 16"><path d="M1 1h15v5.500M1 1v11h9" fill="none" stroke="#8c8c8c" stroke-width="1.500"/><path d="M1 6.500h15" stroke="#8c8c8c" stroke-width="1.300"/><path d="M12.500 8.500l5.500 4-2.600.5 1.300 2.400-1.300.6-1.200-2.500-1.700 1.700z" fill="#8c8c8c"/></svg>
<span class="t" style="left:400.00px;top:52.50px;font-size:6.5px;color:#8c8c8c;transform:scaleX(0.9226);">Editing Fields</span>
<svg class="r" style="left:449px;top:24.5px;" width="13.5" height="11.5" viewBox="0 0 27 23"><rect x="0" y="0" width="4" height="23" fill="#8a8a8a"/><path d="M27 0v23L7 11.500z" fill="#8a8a8a"/></svg>
<span class="t" style="left:450.00px;top:45.00px;font-size:6.5px;color:#8c8c8c;transform:scaleX(0.9497);">First</span>
<span class="t" style="left:449.00px;top:53.40px;font-size:6.5px;color:#8c8c8c;transform:scaleX(0.9057);">Page</span>
<svg class="r" style="left:474.7px;top:23.7px;" width="5.5" height="5.6" viewBox="0 0 5.500 5.600"><path d="M5.200.2v5.200L.5 2.800z" fill="#8a8a8a"/></svg>
<span class="t" style="left:483.75px;top:21.50px;font-size:6.5px;color:#8c8c8c;transform:scaleX(0.9047);">Previous Page</span>
<svg class="r" style="left:476px;top:39px;" width="4.6" height="5.6" viewBox="0 0 4.600 5.600"><path d="M.3.200v5.200L4.400 2.800z" fill="#8a8a8a"/></svg>
<span class="t" style="left:484.00px;top:36.75px;font-size:6.5px;color:#8c8c8c;transform:scaleX(0.9018);">Next  Page</span>
<svg class="r" style="left:474px;top:54.6px;" width="6.8" height="5.6" viewBox="0 0 6.800 5.600"><path d="M.3.200v5.200L4.600 2.800z" fill="#a0a0a0"/><rect x="5.200" y=".2" width="1.400" height="5.200" fill="#a0a0a0"/></svg>
<span class="t" style="left:484.00px;top:52.40px;font-size:6.5px;color:#8c8c8c;transform:scaleX(0.8688);">Last  Page</span>
<div class="r" style="left:528.7px;top:19px;width:17.5px;height:14.8px;background:#646464;"></div>
<svg class="r" style="left:534.5px;top:22.7px;" width="6" height="7.8" viewBox="0 0 12 15.600"><path d="M1 .5v12.500l3.200-2.800 2.100 5 2.200-1-2.100-4.800h4.400z" fill="#f2f2f2"/></svg>
<svg class="r" style="left:532.5px;top:37px;" width="10" height="9" viewBox="0 0 20 18"><g stroke="#f2f2f2" stroke-width="2.300" stroke-linecap="round" fill="none"><path d="M5.500 10L3.300 4.500M8.300 8.500L7.300 2M11.300 8.500L11.800 1.800M14 9.500L15.800 3.500M3.300 10.500L1.500 8.500"/></g><path d="M3 9.500Q9 6 16.500 9.500Q17 14.500 13.500 17.500H7.500Q3.500 14.500 3 9.500z" fill="#f2f2f2"/></svg>
<svg class="r" style="left:533.3px;top:52.6px;" width="7.5" height="8.5" viewBox="0 0 15 17"><circle cx="6" cy="6" r="4.600" fill="#3f7be0" stroke="#f2f2f2" stroke-width="1.700"/><path d="M9.400 9.800L14 15.500" stroke="#f2f2f2" stroke-width="2.200" stroke-linecap="round"/></svg>
<svg class="r" style="left:559px;top:22px;" width="15.5" height="17.5" viewBox="0 0 31 35"><g fill="none" stroke="#8a8a8a" stroke-width="1.500"><rect x="1" y="1" width="12" height="14.500"/><rect x="17.500" y="1" width="12" height="14.500"/><rect x="1" y="19.500" width="12" height="14.500"/></g></svg>
<span class="t" style="left:549.75px;top:45.00px;font-size:6.5px;color:#8c8c8c;transform:scaleX(0.9202);">Many Pages</span>
<svg class="r" style="left:564px;top:56.8px;" width="4" height="2.5" viewBox="0 0 4 2.500"><path d="M.2.200h3.600L2 2.300z" fill="#8a8a8a"/></svg>
<svg class="r" style="left:592px;top:22px;" width="7.5" height="8.5" viewBox="0 0 15 17"><circle cx="6" cy="6" r="4.600" fill="none" stroke="#f2f2f2" stroke-width="1.700"/><path d="M9.400 9.800L14 15.500" stroke="#f2f2f2" stroke-width="2.200" stroke-linecap="round"/><path d="M3.600 6h4.800" stroke="#f2f2f2" stroke-width="1.300"/></svg>
<svg class="r" style="left:592px;top:37.3px;" width="7.5" height="8.5" viewBox="0 0 15 17"><circle cx="6" cy="6" r="4.600" fill="none" stroke="#f2f2f2" stroke-width="1.700"/><path d="M9.400 9.800L14 15.500" stroke="#f2f2f2" stroke-width="2.200" stroke-linecap="round"/></svg>
<svg class="r" style="left:601.5px;top:40.3px;" width="4" height="2.5" viewBox="0 0 4 2.500"><path d="M.2.200h3.600L2 2.300z" fill="#e6e6e6"/></svg>
<svg class="r" style="left:592px;top:52.5px;" width="7.5" height="8.5" viewBox="0 0 15 17"><circle cx="6" cy="6" r="4.600" fill="none" stroke="#f2f2f2" stroke-width="1.700"/><path d="M9.400 9.800L14 15.500" stroke="#f2f2f2" stroke-width="2.200" stroke-linecap="round"/><path d="M3.600 6h4.800M6 3.600v4.800" stroke="#f2f2f2" stroke-width="1.300"/></svg>
<svg class="r" style="left:620px;top:26.5px;" width="9.5" height="10" viewBox="0 0 19 20"><path d="M6 1h7l5 5v13H6z" fill="none" stroke="#f2f2f2" stroke-width="1.600"/><circle cx="5.500" cy="10" r="3.600" fill="#f2f2f2"/><path d="M11 8q3 3 1.500 6-2.500 0-1.500-6z" fill="#3f8cf0"/></svg>
<svg class="r" style="left:631.5px;top:29.8px;" width="4" height="2.5" viewBox="0 0 4 2.500"><path d="M.2.200h3.600L2 2.300z" fill="#e6e6e6"/></svg>
<svg class="r" style="left:622px;top:47px;" width="7.5" height="9.5" viewBox="0 0 15 19"><path d="M1 1h8.500L14 5.500V18H1z" fill="#3a5488" stroke="#e0e0e0" stroke-width="1.600"/></svg>
<svg class="r" style="left:651.3px;top:26.8px;" width="8.5" height="8.5" viewBox="0 0 18 18"><rect x="2" y="3" width="14" height="14" fill="none" stroke="#e8e8e8" stroke-width="1.600"/><rect x="0" y="2" width="18" height="6.500" rx="1" fill="#e8505f"/><path d="M3 5.300h12" stroke="#f7a6ad" stroke-width="1.400" stroke-dasharray="3 1.500"/></svg>
<svg class="r" style="left:666.5px;top:29.8px;" width="4" height="2.5" viewBox="0 0 4 2.500"><path d="M.2.200h3.600L2 2.300z" fill="#e6e6e6"/></svg>
<svg class="r" style="left:651.3px;top:47.8px;" width="8.5" height="8.5" viewBox="0 0 18 18"><rect x="2" y="3" width="14" height="14" fill="none" stroke="#e8e8e8" stroke-width="1.600"/><rect x="0" y="2" width="18" height="6.500" rx="1" fill="#e8505f"/><path d="M3 5.300h12" stroke="#f7a6ad" stroke-width="1.400" stroke-dasharray="3 1.500"/><rect x="8.500" y="11" width="8" height="6" fill="#e8e8e8"/><path d="M9.500 12l3 2.500 3-2.500" stroke="#555" stroke-width="1" fill="none"/></svg>
<svg class="r" style="left:666.5px;top:50.8px;" width="4" height="2.5" viewBox="0 0 4 2.500"><path d="M.2.200h3.600L2 2.300z" fill="#e6e6e6"/></svg>
<svg class="r" style="left:681px;top:22.2px;" width="16" height="16" viewBox="0 0 16 16"><circle cx="8" cy="8" r="8" fill="#f4687a"/><path d="M4.200 4.200l7.600 7.600M11.800 4.200l-7.600 7.600" stroke="#3a3a3a" stroke-width="1.300"/></svg>
<span class="t" style="left:681.00px;top:45.00px;font-size:6.5px;color:#f2f2f2;transform:scaleX(0.9327);">Close</span>
<svg class="r" style="left:724.9px;top:68.2px;" width="5" height="3.5" viewBox="0 0 5 3.500"><path d="M.5 3L2.500.8 4.500 3" stroke="#e0e0e0" stroke-width=".9" fill="none"/></svg>
</body></html>
